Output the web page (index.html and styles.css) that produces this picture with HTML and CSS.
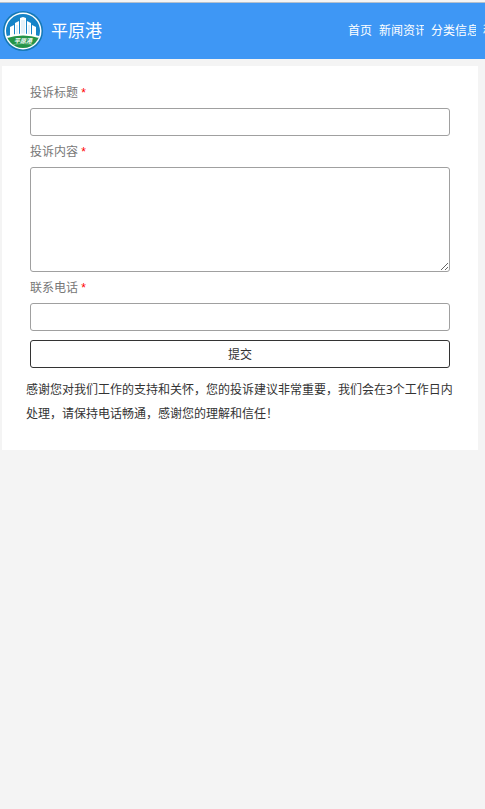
FILE: index.html
```
<!DOCTYPE html>
<html lang="zh-CN">
<head>
<meta charset="utf-8">
<meta name="viewport" content="width=device-width, initial-scale=1">
<title>平原港</title>
<link rel="stylesheet" href="styles.css">
</head>
<body>

<header class="top">
    <a class="brand" href="#">
        <svg class="logo" viewBox="0 0 42 42" aria-hidden="true">
            <defs>
                <clipPath id="disc"><circle cx="21" cy="21" r="17"/></clipPath>
            </defs>
            <circle cx="21" cy="21" r="20" fill="#1579b5"/>
            <circle cx="21" cy="21" r="18.5" fill="#fff"/>
            <g clip-path="url(#disc)">
                <rect width="42" height="42" fill="#1684c8"/>
                <!-- buildings -->
                <path d="M8 26V17l4-2v11zM13 26V13l4-2v15zM18 26V8l3-1 3 1v18zM25 26V11l4 2v13zM30 26V15l4 2v9z" fill="#fff"/>
                <path d="M20 10v14M22 10v14M15 15v9M27 15v9" stroke="#a8d0ea" stroke-width=".6"/>
                <!-- field -->
                <path d="M2 27Q21 20 40 27V42H2z" fill="#fff"/>
                <path d="M2 29Q21 22 40 29V42H2z" fill="#259447"/>
                <path d="M7 36Q20 31 35 36" stroke="#7cc490" stroke-width=".8" fill="none"/>
            </g>
            <text class="logo-text" x="21" y="33" text-anchor="middle">平原港</text>
        </svg>
        <span class="name">平原港</span>
    </a>
    <nav class="nav">
        <a href="#">首页</a>
        <a href="#">新闻资讯</a>
        <a href="#">分类信息</a>
        <a href="#">程序</a>
    </nav>
</header>

<main class="card">
    <form class="form">
        <label for="title">投诉标题 <span class="req">*</span></label>
        <input type="text" id="title" class="field">
        <label for="content">投诉内容 <span class="req">*</span></label>
        <textarea id="content" class="field area"></textarea>
        <label for="phone">联系电话 <span class="req">*</span></label>
        <input type="text" id="phone" class="field">
        <button type="button" class="submit">提交</button>
    </form>
    <p class="note">感谢您对我们工作的支持和关怀，您的投诉建议非常重要，我们会在3个工作日内处理，请保持电话畅通，感谢您的理解和信任！</p>
</main>

</body>
</html>
```
FILE: styles.css
```
* { box-sizing: border-box; }
html, body { margin: 0; padding: 0; background-color: #f4f4f4; }
body { border-top: 2px solid #f4f4f4; font: normal 12px/24px "Noto Sans", "Noto Sans CJK SC", sans-serif; color: #333; }
a { color: #fff; text-decoration: none; }

/* HEADER */

.top   { display: flex; align-items: center; justify-content: space-between; height: 57px; padding-left: 2px; border-top: 1px solid #b5c0cc; background-color: #3e97f5; overflow: hidden; }
.brand { display: flex; align-items: center; gap: 7px; }
.logo  { display: block; width: 42px; height: 42px; }
.logo-text { font-size: 6px; font-weight: bold; font-style: italic; fill: #fff; }
.name  { font-size: 17px; }
.nav   { display: flex; gap: 7px; width: 137px; overflow: hidden; }
.nav a { flex: none; max-width: 45px; overflow: hidden; white-space: nowrap; }

/* FORM */

.card  { margin: 7px 7px 0 2px; padding: 15px 24px 24px; background-color: #fff; }
.form  { padding: 0 4px; }
label  { display: block; margin-bottom: 3px; color: #777; }
.req   { font-family: "Liberation Sans", sans-serif; color: #f00; }
.field { display: block; width: 100%; height: 28px; margin: 0 0 4px; padding: 4px 8px; border: 1px solid #a0a0a0; border-radius: 3px; background-color: #fff; font: inherit; color: inherit; }
.area  { height: 105px; resize: vertical; }
.submit { display: block; width: 100%; height: 28px; margin: 9px 0 10px; padding: 2px 0 0; border: 1px solid #333; border-radius: 3px; background-color: #fff; font: inherit; color: inherit; cursor: pointer; }
.note  { margin: 0; }
```
